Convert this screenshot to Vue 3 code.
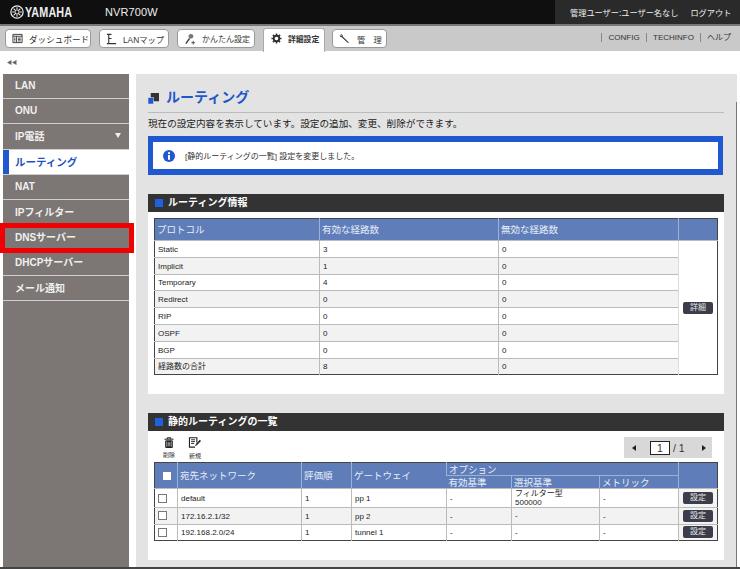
<script setup>
const sideItems = [
  { label: 'LAN' }, { label: 'ONU' }, { label: 'IP電話', caret: true },
  { label: 'ルーティング', active: true }, { label: 'NAT' }, { label: 'IPフィルター' },
  { label: 'DNSサーバー' }, { label: 'DHCPサーバー' }, { label: 'メール通知' }
]
const infoRows = [
  ['Static', '3', '0'], ['Implicit', '1', '0'], ['Temporary', '4', '0'], ['Redirect', '0', '0'],
  ['RIP', '0', '0'], ['OSPF', '0', '0'], ['BGP', '0', '0'], ['経路数の合計', '8', '0']
]
const routes = [
  { net: 'default', ord: '1', gw: 'pp 1', a: '-', b: ['フィルター型', '500000'], c: '-' },
  { net: '172.16.2.1/32', ord: '1', gw: 'pp 2', a: '-', b: ['-'], c: '-' },
  { net: '192.168.2.0/24', ord: '1', gw: 'tunnel 1', a: '-', b: ['-'], c: '-' }
]
</script>

<template>
  <div class="page">
    <header class="top">
      <div class="brand">
        <svg class="logo" viewBox="0 0 16 16" width="14" height="14">
          <circle cx="8" cy="8" r="7" fill="none" stroke="#eee" stroke-width="1.4" />
          <g stroke="#eee" stroke-width="1.2">
            <path d="M8 2.5V13.5M2.5 8H13.5M4.1 4.1L11.9 11.9M11.9 4.1L4.1 11.9" />
          </g>
          <circle cx="8" cy="8" r="1.6" fill="#111" />
        </svg>
        <span class="brand-name">YAMAHA</span>
        <span class="model">NVR700W</span>
      </div>
      <div class="user">
        <span>管理ユーザー:ユーザー名なし</span>
        <span>ログアウト</span>
      </div>
    </header>

    <nav class="tabs">
      <div class="tab t1">
        <svg viewBox="0 0 12 12" width="11" height="11"><path d="M1 1.5H11V10.5H1ZM1 3.5H11M5 3.5V10.5M6.5 5.5H9.5M6.5 7H9.5M6.5 8.7H9.5M2.3 5.5H3.8M2.3 7H3.8M2.3 8.7H3.8" fill="none" stroke="#333" stroke-width="1" /></svg>
        <span>ダッシュボード</span>
      </div>
      <div class="tab t2">
        <svg viewBox="0 0 12 12" width="11" height="12"><path d="M1 1H6M3 1V11H11M3 5.5H6M1 11H5" fill="none" stroke="#333" stroke-width="1.2" /></svg>
        <span>LANマップ</span>
      </div>
      <div class="tab t3">
        <svg viewBox="0 0 13 13" width="12" height="12"><circle cx="7.5" cy="3.6" r="2.6" fill="#777" /><path d="M6 6L2 11.5" stroke="#444" stroke-width="1.6" /><path d="M10 8.5V12.5M8 10.5H12" stroke="#444" stroke-width="1" /></svg>
        <span>かんたん設定</span>
      </div>
      <div class="tab t4 current">
        <svg viewBox="0 0 12 12" width="11" height="11"><circle cx="6" cy="6" r="3" fill="none" stroke="#333" stroke-width="2" /><path d="M6 .5V3M6 9V11.500M.5 6H3M9 6H11.500M2.100 2.100L3.900 3.900M8.100 8.100L9.900 9.900M9.900 2.100L8.100 3.900M3.900 8.100L2.100 9.900" stroke="#333" stroke-width="1.700" /></svg>
        <span>詳細設定</span>
      </div>
      <div class="tab t5">
        <svg viewBox="0 0 12 12" width="11" height="11"><path d="M1.500 1.500C3 .8 4.600 2 4 3.800L10.800 10.300 9.800 11 3 4.700C1.500 5 .5 3.500 1 2.200L2.500 3.500 3 2.800Z" fill="#333" /></svg>
        <span class="spread">管　理</span>
      </div>
      <div class="links">
        <span class="l1">CONFIG</span><span class="l2">TECHINFO</span><span>ヘルプ</span>
      </div>
    </nav>

    <div class="strip">
      <svg class="collapse" viewBox="0 0 10 5" width="10" height="5"><path d="M0 2.500L4.500 0V5ZM5 2.500L9.500 0V5Z" fill="#666" /></svg>
    </div>

    <div class="body">
      <aside class="side">
        <div
          v-for="item in sideItems"
          :key="item.label"
          class="side-item"
          :class="{ active: item.active }"
        >
          <span>{{ item.label }}</span>
          <i v-if="item.caret" class="caret"></i>
        </div>
        <div class="red-box"></div>
      </aside>

      <main class="main">
        <h1 class="title">
          <svg viewBox="0 0 12 12" width="11" height="11">
            <rect x="3" y="0" width="9" height="9" fill="#333" />
            <rect x="0" y="5" width="6" height="7" fill="#1f58d0" stroke="#e2e2e2" stroke-width="0.6" />
          </svg>
          <span>ルーティング</span>
        </h1>
        <p class="desc">現在の設定内容を表示しています。設定の追加、変更、削除ができます。</p>

        <div class="notice">
          <svg viewBox="0 0 12 12" width="12" height="12">
            <circle cx="6" cy="6" r="6" fill="#1f58d0" />
            <rect x="5" y="2.200" width="2" height="1.800" fill="#fff" />
            <rect x="5" y="5" width="2" height="4.800" fill="#fff" />
          </svg>
          <span>[静的ルーティングの一覧] 設定を変更しました。</span>
        </div>

        <section class="card info-card">
          <h2 class="card-head"><i></i>ルーティング情報</h2>
          <div class="card-body">
            <table class="grid info">
              <colgroup>
                <col style="width:165px" /><col style="width:179px" /><col style="width:180px" /><col />
              </colgroup>
              <thead>
                <tr><th>プロトコル</th><th>有効な経路数</th><th>無効な経路数</th><th></th></tr>
              </thead>
              <tbody>
                <tr v-for="(row, i) in infoRows" :key="row[0]" :class="{ odd: i % 2 === 1 }">
                  <td>{{ row[0] }}</td><td>{{ row[1] }}</td><td>{{ row[2] }}</td>
                  <td v-if="i === 0" rowspan="8" class="btn-cell plain"><span class="btn">詳細</span></td>
                </tr>
              </tbody>
            </table>
          </div>
        </section>

        <section class="card list-card">
          <h2 class="card-head"><i></i>静的ルーティングの一覧</h2>
          <div class="card-body">
            <div class="toolbar">
              <div class="tools">
                <div class="tool">
                  <svg viewBox="0 0 12 13" width="10" height="11"><path d="M.5 2.500H11.500M4 2.500V.8H8V2.500M2 4.500H10V12.500H2Z" fill="none" stroke="#222" stroke-width="1.200" /><path d="M3 4.500H9V12H3Z" fill="#222" /><path d="M5 6V11M7 6V11" stroke="#fff" stroke-width=".8" /></svg>
                  <span>削除</span>
                </div>
                <div class="tool">
                  <svg viewBox="0 0 14 13" width="14" height="12"><path d="M9 6V.8H1V11H7" fill="none" stroke="#222" stroke-width="1.200" /><path d="M2.800 3H7M2.800 5H7M2.800 7H6" stroke="#222" /><path d="M7 10L8 7.500 12.200 3 13.500 4.300 9.300 8.800Z" fill="#222" /></svg>
                  <span>新規</span>
                </div>
              </div>
              <div class="pager">
                <i class="arrow left"></i>
                <span class="page-num">1</span>
                <span class="page-of">/ 1</span>
                <i class="arrow right"></i>
              </div>
            </div>

            <table class="grid routes">
              <colgroup>
                <col style="width:23px" /><col style="width:124px" /><col style="width:50px" /><col style="width:95px" />
                <col style="width:65px" /><col style="width:88px" /><col style="width:79px" /><col />
              </colgroup>
              <thead>
                <tr class="h1">
                  <th rowspan="2" class="center"><i class="check head-check"></i></th>
                  <th rowspan="2">宛先ネットワーク</th>
                  <th rowspan="2">評価順</th>
                  <th rowspan="2">ゲートウェイ</th>
                  <th colspan="3" class="opt">オプション</th>
                  <th rowspan="2"></th>
                </tr>
                <tr class="h2"><th>有効基準</th><th>選択基準</th><th>メトリック</th></tr>
              </thead>
              <tbody>
                <tr v-for="(r, i) in routes" :key="r.net" :class="['r' + i, { odd: i % 2 === 1 }]">
                  <td class="chk"><i class="check"></i></td>
                  <td>{{ r.net }}</td>
                  <td>{{ r.ord }}</td>
                  <td>{{ r.gw }}</td>
                  <td>{{ r.a }}</td>
                  <td class="stack"><div v-for="b in r.b" :key="b">{{ b }}</div></td>
                  <td>{{ r.c }}</td>
                  <td class="btn-cell"><span class="btn">設定</span></td>
                </tr>
              </tbody>
            </table>
          </div>
        </section>
      </main>
    </div>
    <div class="foot"></div>
  </div>
</template>

<style>
html, body { margin: 0; background: #fff; }
</style>

<style scoped>
.page {
  width: 740px;
  height: 569px;
  overflow: hidden;
  background: #fff;
  font-family: "Liberation Sans", "Noto Sans CJK JP", sans-serif;
  color: #222;
  display: flex;
  flex-direction: column;
}
.top {
  height: 24px;
  flex: none;
  background: #0f0f0f;
  display: flex;
  justify-content: space-between;
  color: #eee;
}
.brand { display: flex; align-items: center; padding-left: 10px; }
.logo { margin-right: 1px; }
.brand-name { font-size: 14px; font-weight: 700; transform: scaleX(.77); transform-origin: left; width: 48px; letter-spacing: .2px; }
.model { font-size: 11px; margin-left: 32px; letter-spacing: .1px; }
.user {
  width: 185px;
  box-sizing: border-box;
  background: #2a2a2a;
  display: flex;
  align-items: center;
  gap: 12px;
  padding-left: 15px;
  font-size: 8.200px;
  white-space: nowrap;
}
.tabs {
  height: 27px;
  flex: none;
  box-sizing: border-box;
  background: #c9c9c9;
  border-top: 2px solid #777;
  display: flex;
  align-items: flex-start;
  position: relative;
}
.tab {
  position: absolute;
  top: 3px;
  height: 19px;
  box-sizing: border-box;
  background: #fff;
  border: 1px solid #999;
  border-radius: 4px;
  display: flex;
  align-items: center;
  gap: 6px;
  padding-left: 6px;
  font-size: 8.300px;
  color: #333;
  white-space: nowrap;
}
.t1 { left: 5px; width: 86px; font-size: 8.600px; }
.t2 { left: 99px; width: 70px; }
.t3 { left: 177px; width: 78px; font-size: 8px; }
.t4 { left: 263px; width: 62px; top: 2px; height: 24px; border-bottom: 0; border-color: #aaa; border-radius: 3px 3px 0 0; padding-left: 7px; padding-bottom: 4px; font-weight: 700; font-size: 7.800px; }
.t5 { left: 332px; width: 55px; }
.spread { margin-left: 1px; }
.links {
  margin-left: auto;
  margin-right: 3px;
  margin-top: 7px;
  display: flex;
  font-size: 8px;
  color: #333;
}
.links span { padding: 0 6px 0 6.500px; border-left: 1px solid #888; line-height: 9px; white-space: nowrap; }
.links .l1 { width: 44.500px; box-sizing: border-box; }
.links .l2 { width: 54px; box-sizing: border-box; }
.strip { height: 23px; flex: none; position: relative; }
.collapse { position: absolute; left: 7px; top: 9px; }
.body { flex: 1; display: flex; min-height: 0; padding-right: 2px; }
.side {
  width: 126px;
  margin-left: 3px;
  flex: none;
  background: #7c7674;
  position: relative;
}
.side-item {
  height: 24.200px;
  margin-bottom: 1px;
  box-sizing: border-box;
  padding: 0 8px 1px 12px;
  display: flex;
  align-items: center;
  justify-content: space-between;
  color: #f0f0f0;
  font-size: 10px;
  font-weight: 700;
  background: #7c7674;
  box-shadow: 0 1px 0 #cfcfcf;
}
.side-item.active {
  background: #fff;
  color: #1f52c0;
  border-left: 6px solid #1f58d0;
  padding-left: 6px;
  font-size: 10.500px;
}
.caret {
  width: 0;
  height: 0;
  border-left: 3px solid transparent;
  border-right: 3px solid transparent;
  border-top: 5px solid #f0f0f0;
}
.red-box {
  position: absolute;
  left: -3px;
  top: 149px;
  width: 134px;
  height: 30px;
  box-sizing: border-box;
  border: 5px solid #f00000;
}
.main {
  margin-left: 7px;
  width: 601px;
  background: #e3e3e3;
  box-sizing: border-box;
  padding: 0 13px 0 12px;
  position: relative;
}
.main::after {
  content: "";
  position: absolute;
  right: 0;
  top: 28px;
  bottom: 0;
  width: 1px;
  background: #777;
}
.title {
  margin: 14px 0 0;
  height: 24px;
  display: flex;
  align-items: flex-start;
  gap: 7px;
  font-size: 14px;
  line-height: 18px;
  font-weight: 700;
  color: #1f58c8;
  border-bottom: 1px solid #bbb;
}
.title svg { margin-top: 5px; }
.desc {
  margin: 4px 0 0;
  font-size: 9.600px;
  line-height: 13px;
  color: #222;
}
.notice {
  margin-top: 6px;
  height: 39px;
  width: 575px;
  box-sizing: border-box;
  border: solid #1f58d0;
  border-width: 6px 5px;
  background: #fff;
  display: flex;
  align-items: center;
  gap: 10px;
  padding-left: 10px;
  font-size: 8px;
  color: #333;
}
.card { width: 576px; background: #fff; }
.info-card { margin-top: 19px; height: 200px; }
.list-card { margin-top: 19px; height: 147px; }
.card-head {
  margin: 0;
  height: 18px;
  background: #333;
  color: #fff;
  font-size: 10px;
  line-height: 18px;
  font-weight: 700;
  display: flex;
  align-items: center;
  padding-left: 7px;
}
.card-head i { width: 8px; height: 8px; background: #1f5fe0; margin-right: 5px; }
.card-body { padding: 6px 6px 0; }
.grid {
  width: 564px;
  border-collapse: collapse;
  table-layout: fixed;
  border: 1px solid #444;
  font-size: 8px;
  color: #222;
}
.grid th {
  background: #5f7db9;
  color: #e8eef8;
  font-weight: 400;
  text-align: left;
  padding: 0 2px;
  border-left: 1px solid #9db0d6;
  font-size: 9.500px;
  line-height: 11px;
  white-space: nowrap;
}
.grid th:first-child { border-left: 0; }
.grid td {
  padding: 2px 3px 0;
  line-height: 10px;
  border-top: 1px solid #bbb;
  border-left: 1px solid #bbb;
  background: #fff;
  white-space: nowrap;
}
.grid td:first-child { border-left: 0; }
.grid tr.odd td { background: #f2f2f2; }
.grid td.plain { background: #fff !important; }
.info thead tr { height: 22px; }
.info th { padding-bottom: 1px; }
.info tbody tr { height: 16.800px; }
.btn-cell { text-align: center; }
.grid td.btn-cell { background: #f4f4f4; padding: 0; }
.grid td.btn-cell.plain { border-left: 1px solid #ddd; }
.btn {
  display: inline-block;
  width: 30px;
  height: 12px;
  line-height: 12px;
  border-radius: 2px;
  background: #3b3d4b;
  color: #e8e8e8;
  font-size: 8px;
  text-align: center;
  vertical-align: middle;
}
.toolbar {
  height: 28px;
  display: flex;
  justify-content: space-between;
  align-items: flex-start;
  padding: 3px 6px 0;
  box-sizing: border-box;
}
.tools { display: flex; gap: 8px; }
.tool {
  width: 18px;
  display: flex;
  flex-direction: column;
  align-items: center;
  gap: 2px;
  font-size: 6px;
  color: #333;
  white-space: nowrap;
}
.pager {
  height: 21px;
  width: 88px;
  box-sizing: border-box;
  background: #d8d8d8;
  display: flex;
  align-items: center;
  padding: 0 6px 0 8px;
  font-size: 10.500px;
  color: #333;
}
.arrow { width: 0; height: 0; border-top: 3px solid transparent; border-bottom: 3px solid transparent; }
.arrow.left { border-right: 4px solid #222; }
.arrow.right { border-left: 4px solid #222; margin-left: auto; }
.page-num {
  margin-left: 14px;
  width: 18px;
  height: 12px;
  line-height: 12px;
  border: 1px solid #222;
  background: #fff;
  text-align: center;
}
.page-of { margin-left: 3px; }
.list-card .card-body { padding-top: 3px; }
.routes .h1 { height: 13px; }
.routes .h2 { height: 13px; }
.routes .h1 .opt { border-bottom: 1px solid #9db0d6; }
.routes .r0 { height: 19px; }
.routes .r1, .routes .r2 { height: 16.500px; }
.grid td.chk { padding: 0 0 0 3px; }
.grid td.stack { line-height: 9px; padding-top: 0; }
.check {
  display: block;
  width: 7px;
  height: 7px;
  border: 1px solid #777;
  background: #fff;
}
.grid th.center { padding: 0 0 0 8px; }
.head-check { border-color: #fff; width: 6px; height: 6px; }
.foot { height: 2px; flex: none; background: #444; }
</style>
